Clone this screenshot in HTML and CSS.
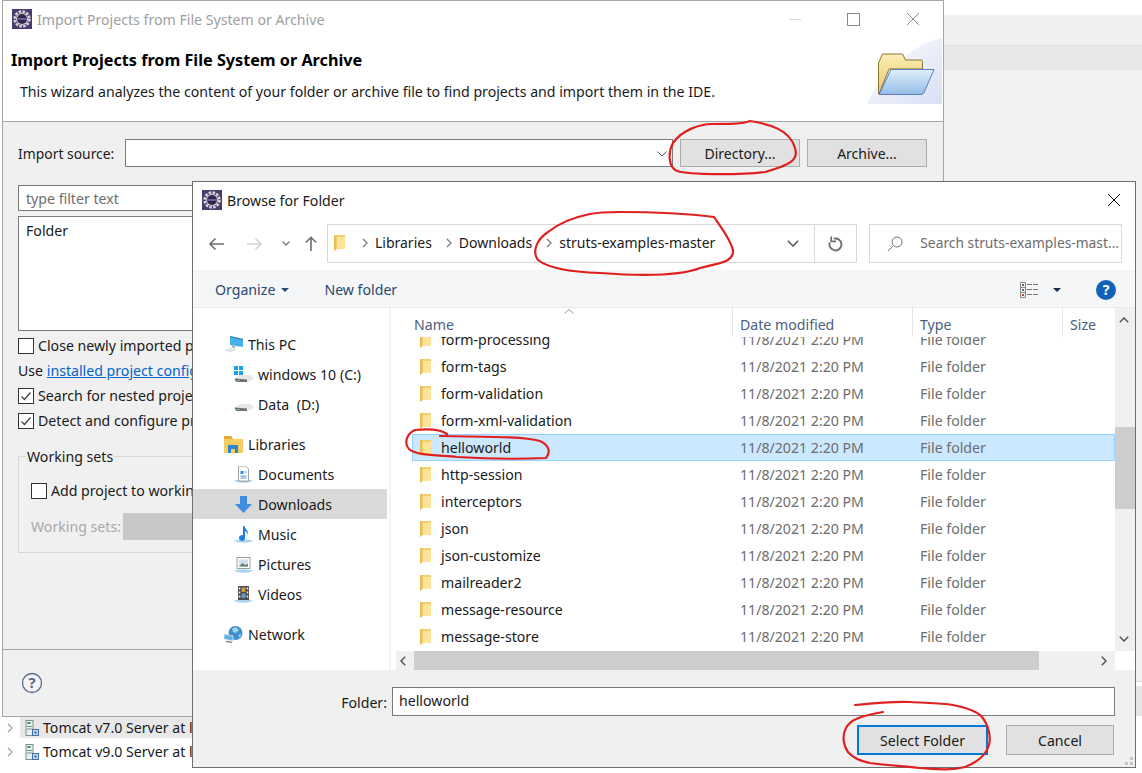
FILE: index.html
```html
<!DOCTYPE html>
<html lang="en">
<head>
  <meta charset="UTF-8" />
  <title>Import Projects from File System or Archive</title>
  <link rel="stylesheet" href="styles.css">
</head>
<body>
  <svg class="defs" width="0" height="0">
    <symbol id="eclipse" viewBox="0 0 20 20">
      <rect width="20" height="20" fill="#4b3c70"/>
      <circle cx="10" cy="10" r="7.4" fill="none" stroke="#d4d4d8" stroke-width="2.6" stroke-dasharray="2.6 1.3"/>
      <circle cx="10" cy="10" r="6" fill="#d0d0d4"/>
      <circle cx="10" cy="10" r="5" fill="#2f2748"/>
      <path d="M5.2 9h9.6v2H5.2z" fill="#6d5f96"/>
    </symbol>
    <symbol id="folder" viewBox="0 0 14 18">
      <path d="M1 1h11v14H3.5L1 17z" fill="#f3d06f"/>
      <path d="M3.5 3H12v12H3.5z" fill="#fbe39a"/>
      <path d="M1 1h2.5v14L1 17z" fill="#e9bf55"/>
    </symbol>
    <symbol id="check" viewBox="0 0 16 16">
      <rect x="0.5" y="0.5" width="15" height="15" fill="#fff" stroke="#333"/>
      <path d="M3.5 8.5l3 3 6-7" fill="none" stroke="#444" stroke-width="1.3"/>
    </symbol>
    <symbol id="server" viewBox="0 0 14 16">
      <rect x="1" y="0.5" width="7" height="15" fill="#e8eef2" stroke="#7f8f8a"/>
      <rect x="2.5" y="2" width="3" height="2" fill="#3a9a4a"/>
      <path d="M2 6.5h5M2 9h5" stroke="#7f8f8a"/>
      <rect x="7.5" y="9.5" width="6" height="6" fill="#c8daf0" stroke="#3e6ea8"/>
      <rect x="9.5" y="11.5" width="2" height="2" fill="#2d5a98"/>
    </symbol>
    <symbol id="dish" viewBox="0 0 19 17">
      <path d="M0 14.500C3 13 16 13 19 14.500C16 17.500 3 17.500 0 14.500z" fill="#a9d3ee"/>
    </symbol>
  </svg>

  <div class="ide">
    <div class="ide-top"></div>
    <div class="ide-tab"></div>
    <div class="ide-rest"></div>
    <div class="ide-bar"></div>
  </div>

  <section class="window wizard">
    <header class="titlebar">
      <svg class="app-icon"><use href="#eclipse"/></svg>
      <span class="title-text dim">Import Projects from File System or Archive</span>
      <div class="win-controls">
        <span class="win-min"></span>
        <span class="win-max"></span>
        <svg class="win-close" viewBox="0 0 12 12"><path d="M0 0l12 12M12 0L0 12" stroke="#8a8a8a" fill="none"/></svg>
      </div>
    </header>
    <div class="banner">
      <h1 class="banner-title">Import Projects from File System or Archive</h1>
      <p class="banner-desc">This wizard analyzes the content of your folder or archive file to find projects and import them in the IDE.</p>
      <svg class="banner-art" viewBox="0 0 76 66">
        <defs>
          <linearGradient id="swoosh" x1="0" y1="0" x2="1" y2="1">
            <stop offset="0" stop-color="#fff"/>
            <stop offset="1" stop-color="#d9e0f5"/>
          </linearGradient>
          <linearGradient id="flap" x1="0" y1="0" x2="0" y2="1">
            <stop offset="0" stop-color="#e0f0fc"/>
            <stop offset="1" stop-color="#95bde8"/>
          </linearGradient>
          <linearGradient id="back" x1="0" y1="0" x2="0" y2="1">
            <stop offset="0" stop-color="#fbeeb5"/>
            <stop offset="1" stop-color="#e5c66c"/>
          </linearGradient>
        </defs>
        <path d="M0 66C10 40 40 8 75 0v66z" fill="url(#swoosh)"/>
        <path d="M11.500 56V25l4-9h20l3 6h15.500a1.500 1.500 0 0 1 1.500 1.500V31H22L12 56z" fill="url(#back)" stroke="#8b7436"/>
        <path d="M12 56.500L24 31.500h43L57 54.500q-1 2-3 2z" fill="url(#flap)" stroke="#5f7cb8"/>
      </svg>
    </div>
    <div class="wizard-body">
      <div class="source-row">
        <label class="source-label">Import source:</label>
        <div class="combo">
          <svg class="combo-arrow" viewBox="0 0 10 6"><path d="M0.500 0.500L5 5l4.500-4.500" fill="none" stroke="#555"/></svg>
        </div>
        <button class="btn btn-dir">Directory...</button>
        <button class="btn btn-archive">Archive...</button>
      </div>
      <div class="filter-input">type filter text</div>
      <div class="source-list">Folder</div>
      <div class="opt-row"><span class="box"></span>Close newly imported projects upon completion</div>
      <div class="opt-row opt-link">Use&nbsp;<a class="link">installed project configurators</a></div>
      <div class="opt-row"><svg class="box-icon"><use href="#check"/></svg>Search for nested projects</div>
      <div class="opt-row"><svg class="box-icon"><use href="#check"/></svg>Detect and configure project natures</div>
      <fieldset class="sets">
        <legend>Working sets</legend>
        <div class="opt-row"><span class="box"></span>Add project to working sets</div>
        <div class="sets-row">
          <span class="sets-label">Working sets:</span>
          <span class="sets-combo"></span>
        </div>
      </fieldset>
      <div class="wizard-foot">
        <svg class="help-icon" viewBox="0 0 22 22">
          <circle cx="11" cy="11" r="9.500" fill="#f4f4f6" stroke="#5a6a8c" stroke-width="1.300"/>
          <text x="11" y="16" class="help-mark">?</text>
        </svg>
      </div>
    </div>
  </section>

  <div class="servers">
    <div class="server-row server-on">
      <svg class="chev" viewBox="0 0 6 10"><path d="M1 1l4 4-4 4" fill="none" stroke="#a0a0a0" stroke-width="1.200"/></svg>
      <svg class="server-icon"><use href="#server"/></svg>Tomcat v7.0 Server at localhost
    </div>
    <div class="server-row server-next">
      <svg class="chev" viewBox="0 0 6 10"><path d="M1 1l4 4-4 4" fill="none" stroke="#a0a0a0" stroke-width="1.200"/></svg>
      <svg class="server-icon"><use href="#server"/></svg>Tomcat v9.0 Server at localhost
    </div>
  </div>

  <section class="window browse">
    <header class="titlebar browse-title">
      <svg class="app-icon"><use href="#eclipse"/></svg>
      <span class="title-text">Browse for Folder</span>
      <svg class="browse-close" viewBox="0 0 12 12"><path d="M0 0l12 12M12 0L0 12" stroke="#111" fill="none"/></svg>
    </header>

    <div class="navbar">
      <svg class="nav-btn" viewBox="0 0 16 14"><path d="M16 7H2M7.500 1.500L2 7l5.500 5.500" fill="none" stroke="#6e6e6e" stroke-width="1.600"/></svg>
      <svg class="nav-btn nav-fwd" viewBox="0 0 16 14"><path d="M0 7h14M8.500 1.500L14 7l-5.500 5.500" fill="none" stroke="#d5d5d5" stroke-width="1.600"/></svg>
      <svg class="nav-drop" viewBox="0 0 8 5"><path d="M0.500 0.500L4 4l3.500-3.500" fill="none" stroke="#7a7a7a" stroke-width="1.300"/></svg>
      <svg class="nav-up" viewBox="0 0 12 15"><path d="M6 15V1.500M0.800 6.500L6 1.300l5.200 5.200" fill="none" stroke="#6e6e6e" stroke-width="1.600"/></svg>
      <div class="address">
        <svg class="addr-folder"><use href="#folder"/></svg>
        <svg class="crumb-sep" viewBox="0 0 6 10"><path d="M1 1l4 4-4 4" fill="none" stroke="#777" stroke-width="1.200"/></svg>
        <span>Libraries</span>
        <svg class="crumb-sep" viewBox="0 0 6 10"><path d="M1 1l4 4-4 4" fill="none" stroke="#777" stroke-width="1.200"/></svg>
        <span>Downloads</span>
        <svg class="crumb-sep" viewBox="0 0 6 10"><path d="M1 1l4 4-4 4" fill="none" stroke="#777" stroke-width="1.200"/></svg>
        <span>struts-examples-master</span>
        <svg class="addr-drop" viewBox="0 0 12 7"><path d="M0.800 0.800L6 6l5.200-5.200" fill="none" stroke="#555" stroke-width="1.500"/></svg>
      </div>
      <div class="refresh">
        <svg viewBox="0 0 15 16" class="refresh-icon"><path d="M5.800 2.700A6 6 0 1 1 1.800 6.500" fill="none" stroke="#6e6e6e" stroke-width="1.900"/><path d="M3.200 0.500v4.800H8" fill="none" stroke="#6e6e6e" stroke-width="1.700"/></svg>
      </div>
      <div class="search">
        <svg class="search-icon" viewBox="0 0 16 16"><circle cx="10" cy="6" r="5" fill="none" stroke="#777"/><path d="M6.500 9.500L0.800 15.200" stroke="#777" fill="none"/></svg>
        <span>Search struts-examples-mast...</span>
      </div>
    </div>

    <div class="cmdbar">
      <span class="cmd">Organize<i class="caret"></i></span>
      <span class="cmd cmd-new">New folder</span>
      <svg class="view-icon" viewBox="0 0 19 16">
        <path d="M0.500 0.500h5v15h-5zM0.500 5.500h5M0.500 10.500h5" fill="none" stroke="#8a8a8a"/>
        <path d="M7 2.500h12M7 7.500h12M7 12.500h12" stroke="#777" stroke-dasharray="5 1"/>
        <rect x="2" y="2" width="2" height="2" fill="#666"/><rect x="2" y="7" width="2" height="2" fill="#666"/><rect x="2" y="12" width="2" height="2" fill="#b5482e"/>
      </svg>
      <i class="caret caret-dark"></i>
      <span class="help-round">?</span>
    </div>

    <div class="content">
      <nav class="tree">
        <div class="tree-row lvl1">
          <svg class="tree-icon" viewBox="0 0 19 17"><path d="M6 0l13 3v8L6 9z" fill="#4aaeea"/><path d="M6 0l13 3v1L6 1z" fill="#2f7fb8"/><path d="M8 9.300l3 .7v2l-3-.5z" fill="#9fb4c2"/><path d="M0 14l7-2.500 6 2-7 3z" fill="#e2e6e8"/></svg>
          This PC
        </div>
        <div class="tree-row lvl2">
          <svg class="tree-icon" viewBox="0 0 19 17"><rect x="0" y="0" width="4" height="4" fill="#19a3e8"/><rect x="5" y="0" width="4" height="4" fill="#19a3e8"/><rect x="0" y="5" width="4" height="4" fill="#19a3e8"/><rect x="5" y="5" width="4" height="4" fill="#19a3e8"/><path d="M1 12l5-3h10l3 2.500v2l-6 2.500H3l-2-1.500z" fill="#e6e8e8"/><path d="M1 12.500l12 1v2.500H3l-2-1.500z" fill="#6c7070"/><rect x="3" y="14" width="3" height="1" fill="#5fd06a"/></svg>
          windows 10 (C:)
        </div>
        <div class="tree-row lvl2">
          <svg class="tree-icon" viewBox="0 0 19 17"><path d="M1 11l5-3h10l3 2.500v2l-6 2.500H3l-2-1.500z" fill="#e6e8e8"/><path d="M1 11.500l12 1V15H3l-2-1.500z" fill="#6c7070"/><rect x="3" y="13" width="3" height="1" fill="#5fd06a"/></svg>
          Data &nbsp;(D:)
        </div>
        <div class="tree-row lvl1 tree-gap">
          <svg class="tree-icon" viewBox="0 0 19 17"><path d="M0 0h7l2 3h10v14H0z" fill="#f7cd62"/><path d="M0 0h7l2 3H0z" fill="#e8a92f"/><path d="M4 17V9h10v8h-3v-4H7v4z" fill="#2f86d0"/></svg>
          Libraries
        </div>
        <div class="tree-row lvl2">
          <svg class="tree-icon" viewBox="0 0 19 17"><use href="#dish"/><path d="M4.500 0h7l3 3v12h-10z" fill="#fff" stroke="#8a8f96" stroke-width="0.800"/><path d="M6.500 5h3v3h-3z" fill="#3f8fd0"/><path d="M6.500 10h6M6.500 12h6M10.500 6h2" stroke="#4f97d4"/></svg>
          Documents
        </div>
        <div class="tree-row lvl2 tree-on">
          <svg class="tree-icon" viewBox="0 0 19 17"><path d="M6 0h7v8h5l-8.500 9L1 8h5z" fill="#3d8ee0"/></svg>
          Downloads
        </div>
        <div class="tree-row lvl2">
          <svg class="tree-icon" viewBox="0 0 19 17"><use href="#dish"/><path d="M9 0h1.500c.5 3 4 4.500 3.500 8.500-.8-2-2.200-3-3-3.200V12a3 3 0 1 1-2-2.800z" fill="#1f7ee0"/></svg>
          Music
        </div>
        <div class="tree-row lvl2">
          <svg class="tree-icon" viewBox="0 0 19 17"><use href="#dish"/><rect x="3" y="1.500" width="13" height="11" fill="#fff" stroke="#7f8a90" stroke-width="0.800"/><path d="M5 3.500h9v7H5z" fill="#cfe0ea"/><path d="M5 10.500l3.500-3.500 2.500 2 3-1v2.500z" fill="#5f7f6a"/></svg>
          Pictures
        </div>
        <div class="tree-row lvl2">
          <svg class="tree-icon" viewBox="0 0 19 17"><use href="#dish"/><rect x="4" y="0" width="11" height="14" fill="#4c4c50"/><path d="M5.500 1.500v2M5.500 5.500v2M5.500 9.500v2M13.500 1.500v2M13.500 5.500v2M13.500 9.500v2" stroke="#e8e8e8" stroke-width="1.500"/><rect x="7.500" y="1.500" width="4" height="4.500" fill="#d09a3a"/><rect x="7.500" y="7.500" width="4" height="4.500" fill="#5f9fc0"/></svg>
          Videos
        </div>
        <div class="tree-row lvl1 tree-gap">
          <svg class="tree-icon" viewBox="0 0 19 17"><circle cx="11.500" cy="7" r="7" fill="#3f8fcf"/><path d="M8 3l4-2 3 3-3 3-3-1zM14 9l3-1-1 4z" fill="#9ed4ee"/><path d="M0 8l9 2v5l-9-2z" fill="#5ab4ea" stroke="#dfe8ee" stroke-width="0.800"/><path d="M2 15.500l6 1" stroke="#7f8a90" stroke-width="1.500"/></svg>
          Network
        </div>
      </nav>

      <div class="files">
        <div class="files-top">
          <div class="file-pane">
            <div class="file-head">
              <span class="col col-name">Name</span>
              <span class="col col-date">Date modified</span>
              <span class="col col-type">Type</span>
              <span class="col col-size">Size</span>
              <svg class="sort-mark" viewBox="0 0 10 5"><path d="M0.500 4.500L5 0.500l4.500 4" fill="none" stroke="#999"/></svg>
            </div>
            <div class="file-list">
              <div class="file-row file-clipped"><svg class="row-folder"><use href="#folder"/></svg><span>form-processing</span><span class="meta">11/8/2021 2:20 PM</span><span class="meta">File folder</span></div>
              <div class="file-row"><svg class="row-folder"><use href="#folder"/></svg><span>form-tags</span><span class="meta">11/8/2021 2:20 PM</span><span class="meta">File folder</span></div>
              <div class="file-row"><svg class="row-folder"><use href="#folder"/></svg><span>form-validation</span><span class="meta">11/8/2021 2:20 PM</span><span class="meta">File folder</span></div>
              <div class="file-row"><svg class="row-folder"><use href="#folder"/></svg><span>form-xml-validation</span><span class="meta">11/8/2021 2:20 PM</span><span class="meta">File folder</span></div>
              <div class="file-row file-on"><svg class="row-folder"><use href="#folder"/></svg><span>helloworld</span><span class="meta">11/8/2021 2:20 PM</span><span class="meta">File folder</span></div>
              <div class="file-row"><svg class="row-folder"><use href="#folder"/></svg><span>http-session</span><span class="meta">11/8/2021 2:20 PM</span><span class="meta">File folder</span></div>
              <div class="file-row"><svg class="row-folder"><use href="#folder"/></svg><span>interceptors</span><span class="meta">11/8/2021 2:20 PM</span><span class="meta">File folder</span></div>
              <div class="file-row"><svg class="row-folder"><use href="#folder"/></svg><span>json</span><span class="meta">11/8/2021 2:20 PM</span><span class="meta">File folder</span></div>
              <div class="file-row"><svg class="row-folder"><use href="#folder"/></svg><span>json-customize</span><span class="meta">11/8/2021 2:20 PM</span><span class="meta">File folder</span></div>
              <div class="file-row"><svg class="row-folder"><use href="#folder"/></svg><span>mailreader2</span><span class="meta">11/8/2021 2:20 PM</span><span class="meta">File folder</span></div>
              <div class="file-row"><svg class="row-folder"><use href="#folder"/></svg><span>message-resource</span><span class="meta">11/8/2021 2:20 PM</span><span class="meta">File folder</span></div>
              <div class="file-row"><svg class="row-folder"><use href="#folder"/></svg><span>message-store</span><span class="meta">11/8/2021 2:20 PM</span><span class="meta">File folder</span></div>
            </div>
          </div>
          <div class="vscroll">
            <svg class="sb-arrow" viewBox="0 0 10 6"><path d="M0.800 5.200L5 1l4.200 4.200" fill="none" stroke="#555" stroke-width="1.500"/></svg>
            <span class="vthumb"></span>
            <svg class="sb-arrow" viewBox="0 0 10 6"><path d="M0.800 0.800L5 5l4.200-4.200" fill="none" stroke="#555" stroke-width="1.500"/></svg>
          </div>
        </div>
        <div class="hscroll">
          <svg class="sb-arrow-h" viewBox="0 0 6 10"><path d="M5.200 0.800L1 5l4.200 4.200" fill="none" stroke="#555" stroke-width="1.500"/></svg>
          <span class="hthumb"></span>
          <svg class="sb-arrow-h" viewBox="0 0 6 10"><path d="M0.800 0.800L5 5 0.800 9.200" fill="none" stroke="#555" stroke-width="1.500"/></svg>
        </div>
      </div>
    </div>

    <footer class="browse-foot">
      <div class="folder-row">
        <label class="folder-label">Folder:</label>
        <div class="folder-input">helloworld</div>
      </div>
      <div class="btn-row">
        <button class="btn btn-select">Select Folder</button>
        <button class="btn btn-cancel">Cancel</button>
      </div>
      <svg class="grip" viewBox="0 0 8 8"><path d="M5 0h3v3H5zM0 5h3v3H0zM5 5h3v3H5z" fill="#c4c4c4"/></svg>
    </footer>
  </section>

  <svg class="scribbles" viewBox="0 0 1142 773">
    <path d="M750 121C770 124 790 130 795 148C799 160 790 165 765 172C740 175 690 175 677 171C668 167 668 152 673 143C682 130 700 124 712 124C730 124 742 124 750 121"/>
    <path d="M590 214C570 218 558 224 548 232C536 240 532 252 538 260C548 268 570 272 600 273C640 276 680 276 700 268C720 263 734 262 733 250C730 238 720 226 714 217C690 214 650 212 620 212C610 212 600 212 590 214"/>
    <path d="M447 434C440 429 425 429 415 430C406 434 404 444 409 449C415 455 435 455 457 457C490 459 525 459 546 458C551 452 549 445 540 441C520 436 480 437 440 436"/>
    <path d="M855 705C875 703 895 701 910 702C925 703 940 703 953 705C968 708 978 712 982 717C989 726 991 737 989 745C986 755 978 762 965 767C950 771 935 769 920 768C900 766 885 765 870 763C860 761 852 757 848 752C843 745 842 735 846 728C850 720 860 716 883 712"/>
  </svg>
</body>
</html>
```

FILE: styles.css
```css
/* Page */
html, body {
  margin: 0;
  padding: 0;
}

body {
  position: relative;
  width: 1142px;
  height: 773px;
  overflow: hidden;
  background-color: #fff;
  font-family: "Noto Sans", "Open Sans", sans-serif;
  font-size: 14.15px;
  color: #1a1a1a;
}

.defs {
  position: absolute;
}

/* IDE behind the windows */
.ide {
  position: absolute;
  left: 944px;
  top: 15px;
  width: 198px;
  display: flex;
  flex-direction: column;
}

.ide-top {
  height: 30px;
  background-color: #f0f0f0;
  border-bottom: 1px solid #dcdcdc;
}

.ide-tab {
  height: 24px;
  background-color: #e8e8e8;
}

.ide-rest {
  height: 611px;
  background-color: #f2f2f2;
  border-bottom: 1px solid #dcdcdc;
}

.ide-bar {
  height: 30px;
  margin-top: 4px;
  background-color: #e6e6e6;
}

.window {
  position: absolute;
  box-sizing: border-box;
  display: flex;
  flex-direction: column;
}

/* Wizard */
.wizard {
  left: 2px;
  top: 0;
  width: 942px;
  height: 717px;
  background-color: #f0f0f0;
  border: 1px solid #a6a6a6;
}

.titlebar {
  display: flex;
  align-items: center;
  flex-shrink: 0;
  height: 36px;
  background-color: #fff;
  padding-left: 9px;
}

.app-icon {
  width: 20px;
  height: 20px;
  margin-right: 5px;
}

.dim {
  color: #a0a0a0;
}

.win-controls {
  display: flex;
  align-items: center;
  margin-left: auto;
}

.win-min {
  width: 12px;
  height: 1px;
  background-color: #d8d8d8;
  margin-right: 46px;
}

.win-max {
  width: 11px;
  height: 11px;
  border: 1px solid #8a8a8a;
  margin-right: 47px;
}

.win-close {
  width: 12px;
  height: 12px;
  margin-right: 24px;
}

.banner {
  position: relative;
  flex-shrink: 0;
  box-sizing: border-box;
  height: 85px;
  background-color: #fff;
  border-bottom: 1px solid #a6a6a6;
}

.banner-title {
  margin: 0;
  padding: 12px 0 0 8px;
  font-size: 16.2px;
  line-height: 22px;
  font-weight: 700;
  color: #000;
}

.banner-desc {
  margin: 11px 0 0 17px;
  line-height: 20px;
}

.banner-art {
  position: absolute;
  right: 0;
  top: 1px;
  width: 76px;
  height: 66px;
}

.wizard-body {
  flex: 1;
  display: flex;
  flex-direction: column;
  padding: 17px 15px 0;
}

.source-row {
  display: flex;
  align-items: center;
  height: 28px;
}

.source-label {
  width: 107px;
  font-size: 13.9px;
}

.combo {
  position: relative;
  box-sizing: border-box;
  width: 548px;
  height: 28px;
  background-color: #fff;
  border: 1px solid #7a7a7a;
}

.combo-arrow {
  position: absolute;
  right: 5px;
  top: 11px;
  width: 10px;
  height: 6px;
}

.btn {
  box-sizing: border-box;
  height: 28px;
  padding: 0;
  font-family: inherit;
  font-size: inherit;
  color: #1a1a1a;
  background-color: #e1e1e1;
  border: 1px solid #adadad;
}

.btn-dir {
  width: 120px;
  margin-left: 7px;
  font-size: 14px;
}

.btn-archive {
  width: 120px;
  margin-left: 7px;
  font-size: 14px;
}

.filter-input {
  box-sizing: border-box;
  height: 26px;
  margin-top: 18px;
  padding: 0 7px;
  line-height: 25px;
  color: #6d6d6d;
  background-color: #fff;
  border: 1px solid #7a7a7a;
}

.source-list {
  box-sizing: border-box;
  height: 115px;
  margin-top: 5px;
  padding: 4px 7px;
  background-color: #fff;
  border: 1px solid #7a7a7a;
}

.opt-row {
  display: flex;
  align-items: center;
  height: 25px;
  white-space: nowrap;
}

.source-list + .opt-row {
  margin-top: 2px;
}

.box {
  box-sizing: border-box;
  width: 16px;
  height: 16px;
  margin-right: 4px;
  background-color: #fff;
  border: 1px solid #333;
}

.box-icon {
  width: 16px;
  height: 16px;
  margin-right: 4px;
}

.link {
  color: #0066cc;
  text-decoration: underline;
}

.sets {
  height: 106px;
  box-sizing: border-box;
  margin: 14px 0 0;
  padding: 12px 12px 0;
  border: 1px solid #d8d8d8;
}

.sets legend {
  padding: 0 1px;
  margin-left: -5px;
}

.sets-row {
  display: flex;
  align-items: center;
  margin-top: 10px;
}

.sets-label {
  width: 92px;
  color: #a8a8a8;
}

.sets-combo {
  width: 600px;
  height: 27px;
  background-color: #c8c8c8;
}

.wizard-foot {
  margin: 96px -15px 0;
  box-sizing: border-box;
  height: 67px;
  border-top: 1px solid #a6a6a6;
  display: flex;
  align-items: center;
  padding: 0 0 1px 18px;
}

.help-icon {
  width: 22px;
  height: 22px;
}

.help-mark {
  font-size: 15px;
  font-weight: 700;
  text-anchor: middle;
  fill: #5a6a8c;
}

/* Server list peeking out below the wizard */
.servers {
  position: absolute;
  left: 0;
  top: 717px;
  width: 192px;
}

.server-row {
  display: flex;
  align-items: center;
  height: 21px;
  white-space: nowrap;
  overflow: hidden;
}

.server-next {
  height: 23px;
  margin-top: 2px;
}

.server-on {
  background: linear-gradient(to right, #fff 20px, #e8e8e8 20px);
}

.chev {
  flex-shrink: 0;
  width: 6px;
  height: 10px;
  margin: 0 12px 0 7px;
}

.server-icon {
  flex-shrink: 0;
  width: 14px;
  height: 16px;
  margin-right: 4px;
}

/* Browse dialog */
.browse {
  left: 192px;
  top: 181px;
  width: 944px;
  height: 587px;
  background-color: #fff;
  border: 1px solid #6e6e6e;
}

.browse-close {
  width: 12px;
  height: 12px;
  margin: 0 15px 0 auto;
}

.navbar {
  display: flex;
  align-items: center;
  flex-shrink: 0;
  box-sizing: border-box;
  height: 52px;
  padding: 6px 13px 7px 15px;
}

.nav-btn {
  width: 16px;
  height: 14px;
}

.nav-fwd {
  margin-left: 23px;
}

.nav-drop {
  width: 8px;
  height: 5px;
  margin-left: 19px;
}

.nav-up {
  width: 12px;
  height: 15px;
  margin-left: 15px;
}

.address {
  display: flex;
  align-items: center;
  box-sizing: border-box;
  width: 489px;
  height: 39px;
  margin-left: 10px;
  padding: 0 0 2px 5px;
  font-size: 14px;
  border: 1px solid #d9d9d9;
}

.addr-folder {
  width: 14px;
  height: 18px;
  margin-right: 2px;
}

.crumb-sep {
  width: 6px;
  height: 10px;
  margin: 0 7px 0 13px;
}

.crumb-sep + span {
  margin-right: 1px;
}

.addr-drop {
  width: 12px;
  height: 7px;
  margin: 2px 15px 0 auto;
}

.refresh {
  display: flex;
  align-items: center;
  justify-content: center;
  box-sizing: border-box;
  width: 43px;
  height: 39px;
  margin-left: -1px;
  border: 1px solid #d9d9d9;
}

.refresh-icon {
  width: 15px;
  height: 16px;
}

.search {
  display: flex;
  align-items: center;
  box-sizing: border-box;
  width: 253px;
  height: 39px;
  margin-left: 12px;
  padding: 0 0 2px 17px;
  font-size: 13.8px;
  color: #6d6d6d;
  white-space: nowrap;
  border: 1px solid #d9d9d9;
}

.search-icon {
  width: 16px;
  height: 16px;
  margin: 2px 17px 0 0;
}

.cmdbar {
  display: flex;
  align-items: center;
  flex-shrink: 0;
  box-sizing: border-box;
  height: 38px;
  padding: 2px 0 0 22px;
  color: #2a4a6e;
  background-color: #f5f6f7;
  border-bottom: 1px solid #eaeaea;
}

.cmd {
  display: flex;
  align-items: center;
}

.cmd-new {
  margin-left: 35px;
}

.caret {
  width: 0;
  height: 0;
  margin-left: 6px;
  border-left: 4px solid transparent;
  border-right: 4px solid transparent;
  border-top: 4px solid #2a4a6e;
}

.caret-dark {
  margin: 0 0 0 14px;
  border-top-color: #1a2a4e;
}

.view-icon {
  width: 19px;
  height: 16px;
  margin-left: auto;
}

.help-round {
  display: flex;
  align-items: center;
  justify-content: center;
  width: 20px;
  height: 20px;
  margin: 0 19px 0 35px;
  border-radius: 50%;
  color: #fff;
  font-weight: 700;
  background-color: #0f62b8;
}

.content {
  display: flex;
  height: 362px;
  flex-shrink: 0;
}

.tree {
  box-sizing: border-box;
  width: 198px;
  padding-top: 21px;
  border-right: 2px solid #f3f3f3;
}

.tree-row {
  display: flex;
  align-items: center;
  height: 30px;
}

.lvl1 {
  padding-left: 31px;
  width: 163px;
}

.lvl2 {
  padding-left: 41px;
  width: 153px;
}

.tree-gap {
  margin-top: 10px;
}

.tree-on {
  background-color: #d9d9d9;
}

.tree-icon {
  width: 19px;
  height: 17px;
  margin-right: 5px;
}

.files {
  flex: 1;
  display: flex;
  flex-direction: column;
  min-width: 0;
}

.files-top {
  display: flex;
  height: 343px;
}

.file-pane {
  flex: 1;
  min-width: 0;
  padding-left: 21px;
  overflow: hidden;
}

.file-head {
  position: relative;
  display: grid;
  grid-template-columns: 321px 180px 150px 1fr;
  height: 29px;
  color: #4c607a;
}

.col {
  display: flex;
  align-items: center;
  padding: 4px 0 0 7px;
  border-right: 1px solid #e5e5e5;
}

.col-name {
  padding-left: 2px;
}

.col-size {
  border-right: 0;
}

.sort-mark {
  position: absolute;
  left: 152px;
  top: 1px;
  width: 10px;
  height: 5px;
}

.file-list {
  height: 314px;
  overflow: hidden;
}

.file-row {
  box-sizing: border-box;
  display: grid;
  grid-template-columns: 22px 299px 180px 1fr;
  align-items: center;
  height: 27px;
  padding-left: 7px;
}

.file-clipped {
  margin-top: -11px;
}

.file-on {
  background-color: #cce8ff;
  outline: 1px solid #99d1ff;
  outline-offset: -1px;
}

.row-folder {
  width: 14px;
  height: 18px;
}

.meta {
  color: #6d6d6d;
}

.vscroll {
  display: flex;
  flex-direction: column;
  align-items: center;
  justify-content: space-between;
  position: relative;
  box-sizing: border-box;
  width: 20px;
  padding: 9px 2px 9px 0;
  background-color: #f0f0f0;
}

.sb-arrow {
  width: 10px;
  height: 6px;
}

.vthumb {
  position: absolute;
  left: 0;
  top: 119px;
  width: 20px;
  height: 82px;
  background-color: #cdcdcd;
}

.hscroll {
  display: flex;
  align-items: center;
  box-sizing: border-box;
  height: 19px;
  margin-left: 5px;
  margin-right: 20px;
  padding: 0 7px 0 4px;
  background-color: #f0f0f0;
}

.sb-arrow-h {
  flex-shrink: 0;
  width: 6px;
  height: 10px;
}

.hthumb {
  width: 625px;
  height: 19px;
  margin: 0 62px 0 8px;
  background-color: #cdcdcd;
}

.browse-foot {
  position: relative;
  flex: 1;
  display: flex;
  flex-direction: column;
  background-color: #f0f0f0;
  padding: 17px 20px 0 0;
}

.folder-row {
  display: flex;
  align-items: center;
  justify-content: flex-end;
}

.folder-label {
  margin-right: 5px;
  padding-top: 2px;
}

.folder-input {
  box-sizing: border-box;
  width: 723px;
  height: 29px;
  padding-left: 6px;
  line-height: 26px;
  background-color: #fff;
  border: 1px solid #7a7a7a;
}

.btn-row {
  display: flex;
  justify-content: flex-end;
  margin-top: 9px;
  padding-right: 1px;
}

.btn-select {
  width: 131px;
  height: 30px;
  margin-right: 18px;
  border: 2px solid #0078d7;
}

.btn-cancel {
  width: 108px;
  height: 30px;
}

.grip {
  position: absolute;
  right: 2px;
  bottom: 2px;
  width: 8px;
  height: 8px;
}

/* Red pen marks drawn on top of the screenshot */
.scribbles {
  position: absolute;
  left: 0;
  top: 0;
  width: 1142px;
  height: 773px;
  pointer-events: none;
}

.scribbles path {
  fill: none;
  stroke: #e0201f;
  stroke-width: 2.2;
  stroke-linecap: round;
}
```
